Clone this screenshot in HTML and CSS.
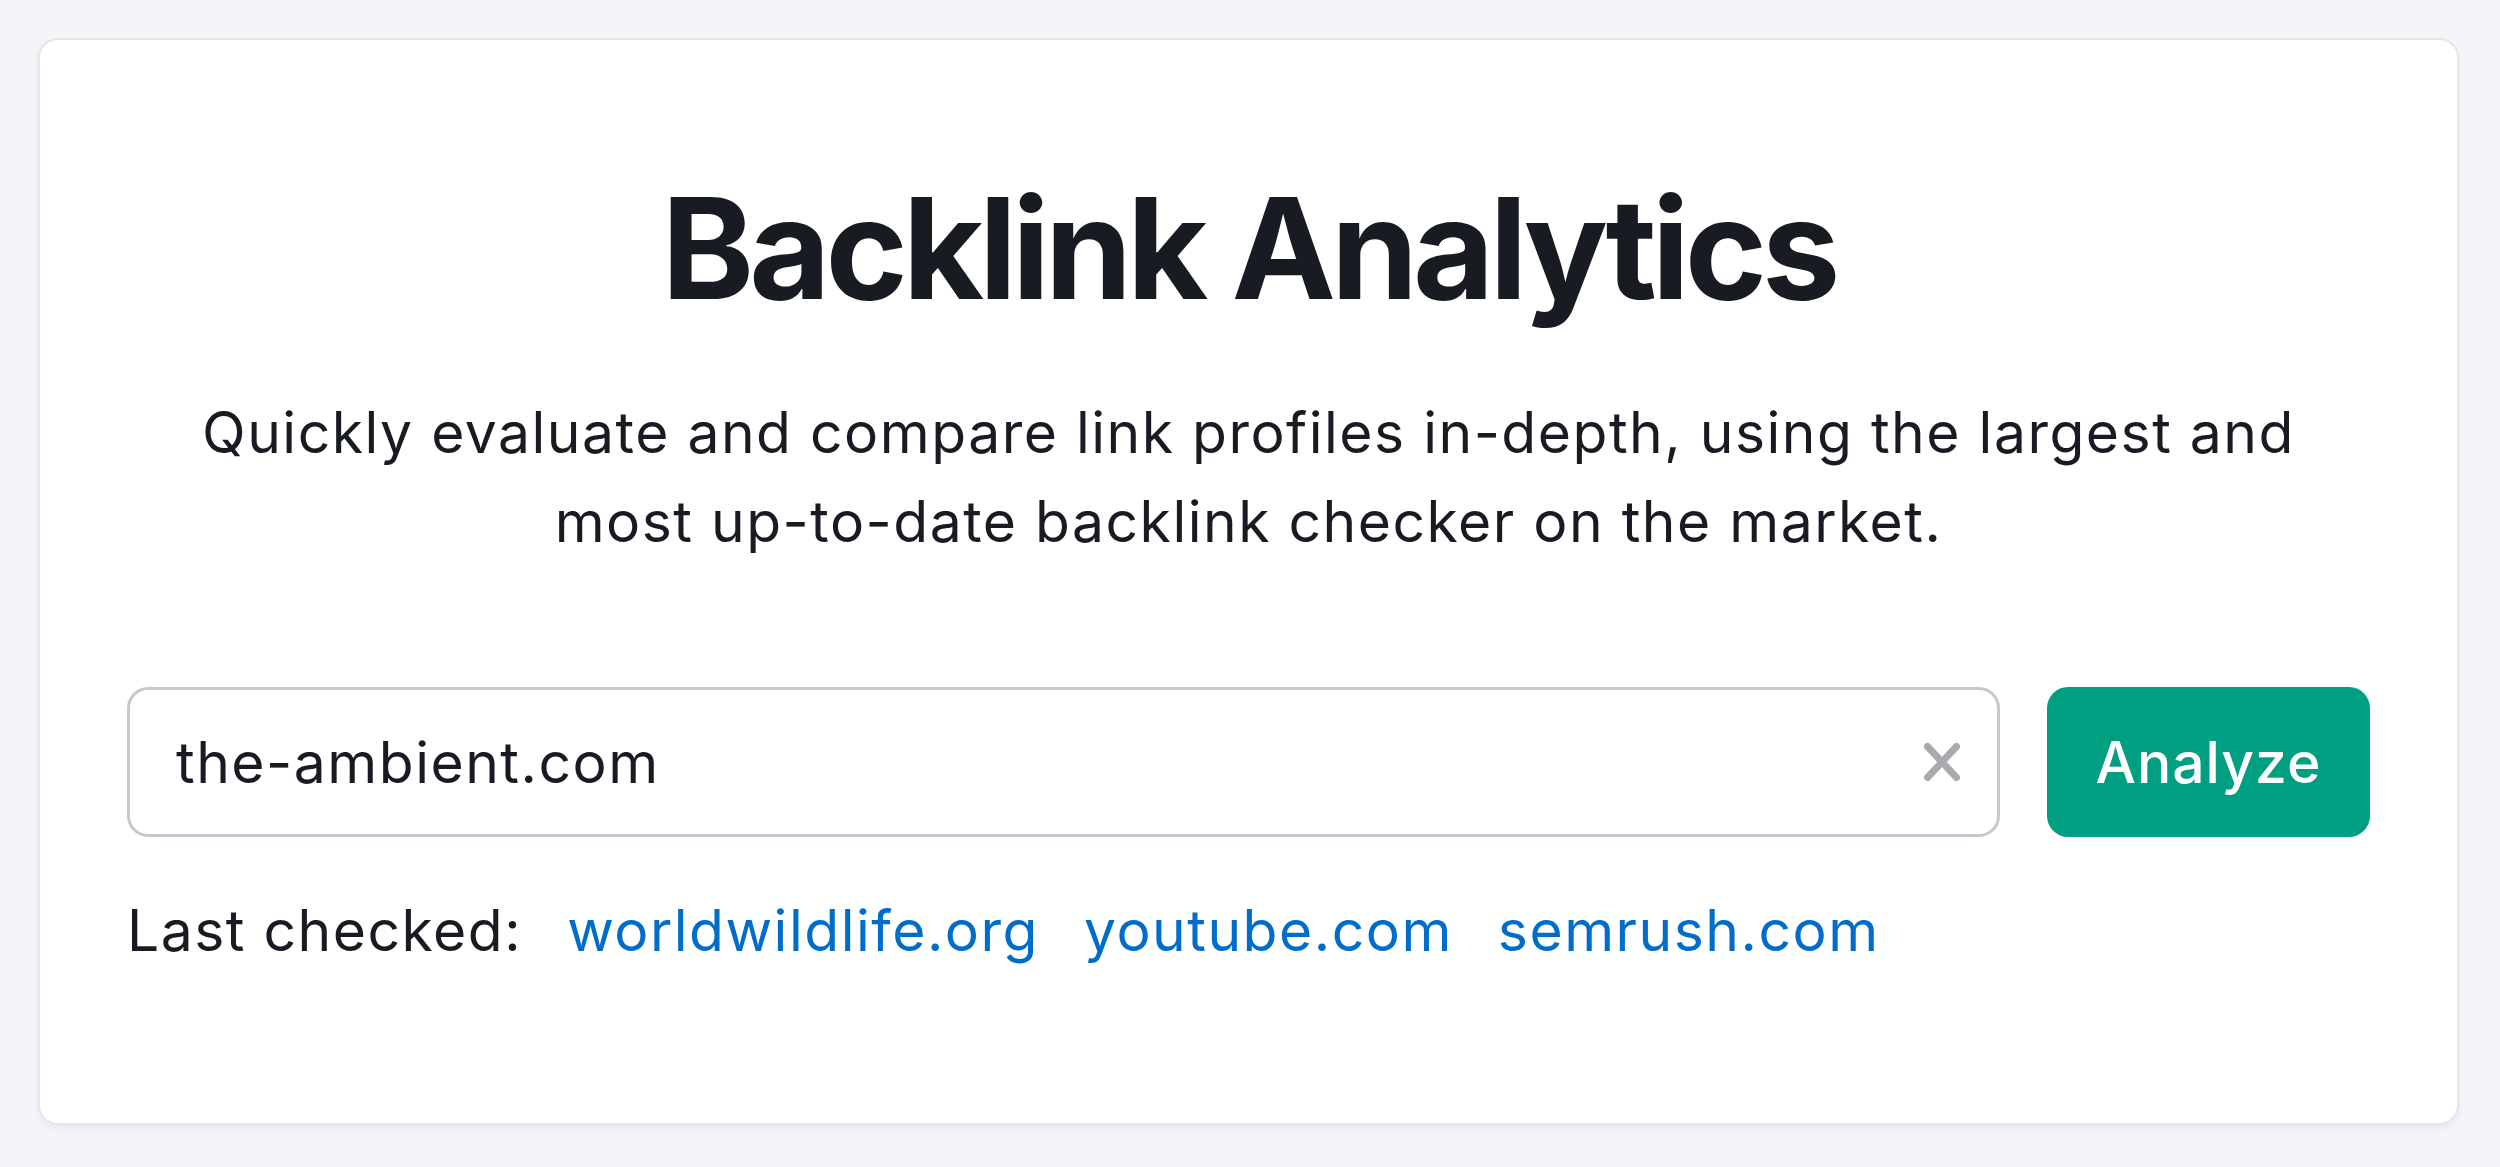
FILE: index.html
```html
<!DOCTYPE html>
<html lang="en">
<head>
<meta charset="utf-8">
<title>Backlink Analytics</title>
<link rel="stylesheet" href="styles.css">
</head>
<body>
<main class="card">
  <h1 class="title">Backlink Analytics</h1>
  <p class="subtitle">Quickly evaluate and compare link profiles in-depth, using the largest and<br>most up-to-date backlink checker on the market.</p>
  <form class="search" onsubmit="return false">
    <div class="field">
      <span class="field-value">the-ambient.com</span>
      <button type="button" class="clear" aria-label="Clear">
        <svg viewBox="0 0 42 42" width="42" height="42"><path d="M6.5 5.5 L35.5 36.5 M35.5 5.5 L6.5 36.5" stroke="#a9aab0" stroke-width="7" stroke-linecap="round" fill="none"/></svg>
      </button>
    </div>
    <button type="submit" class="analyze">Analyze</button>
  </form>
  <div class="recent">
    <span class="recent-label">Last checked:</span>
    <a href="#" class="recent-link">worldwildlife.org</a>
    <a href="#" class="recent-link">youtube.com</a>
    <a href="#" class="recent-link">semrush.com</a>
  </div>
</main>
</body>
</html>
```
FILE: styles.css
```css
html, body {
  margin: 0;
  padding: 0;
  background: #f4f5f9;
}
body {
  padding: 40px 43px 44px 40px;
  font-family: Inter, "Noto Sans", "Liberation Sans", sans-serif;
  color: #191b23;
}
.card {
  box-sizing: border-box;
  height: 1083px;
  background: #ffffff;
  border-radius: 18px;
  box-shadow: 0 0 0 2px #e6e7ec, 0 4px 8px rgba(30, 35, 60, 0.08);
  padding: 124px 87px 0 87px;
  display: flex;
  flex-direction: column;
}
.title {
  margin: 0;
  font-size: 140px;
  line-height: 168px;
  font-weight: 700;
  text-align: center;
  letter-spacing: -5px;
  color: #191b23;
}
.subtitle {
  margin: 56px 0 0;
  font-size: 57px;
  line-height: 89px;
  font-weight: 400;
  letter-spacing: 1.5px;
  text-align: center;
  color: #191b23;
}
.search {
  margin-top: 121px;
  display: flex;
  gap: 47px;
  height: 150px;
}
.field {
  flex: 1;
  box-sizing: border-box;
  border: 3px solid #c5c8d0;
  border-radius: 21px;
  display: flex;
  align-items: center;
  padding: 0 34px 0 46px;
}
.field-value {
  flex: 1;
  font-size: 57px;
  letter-spacing: 1.5px;
  color: #191b23;
}
.clear {
  border: 0;
  background: none;
  padding: 0;
  width: 42px;
  height: 42px;
  display: flex;
  align-items: center;
  justify-content: center;
}
.analyze {
  width: 323px;
  border: 0;
  border-radius: 21px;
  background: #009f81;
  color: #ffffff;
  font-family: Inter, "Noto Sans", "Liberation Sans", sans-serif;
  font-size: 57px;
  font-weight: 500;
  letter-spacing: 1px;
}
.recent {
  margin-top: 60px;
  display: flex;
  gap: 45px;
  font-size: 57px;
  line-height: 68px;
  letter-spacing: 1.5px;
}
.recent-label {
  color: #191b23;
}
.recent-link {
  color: #006dca;
  text-decoration: none;
}
```
